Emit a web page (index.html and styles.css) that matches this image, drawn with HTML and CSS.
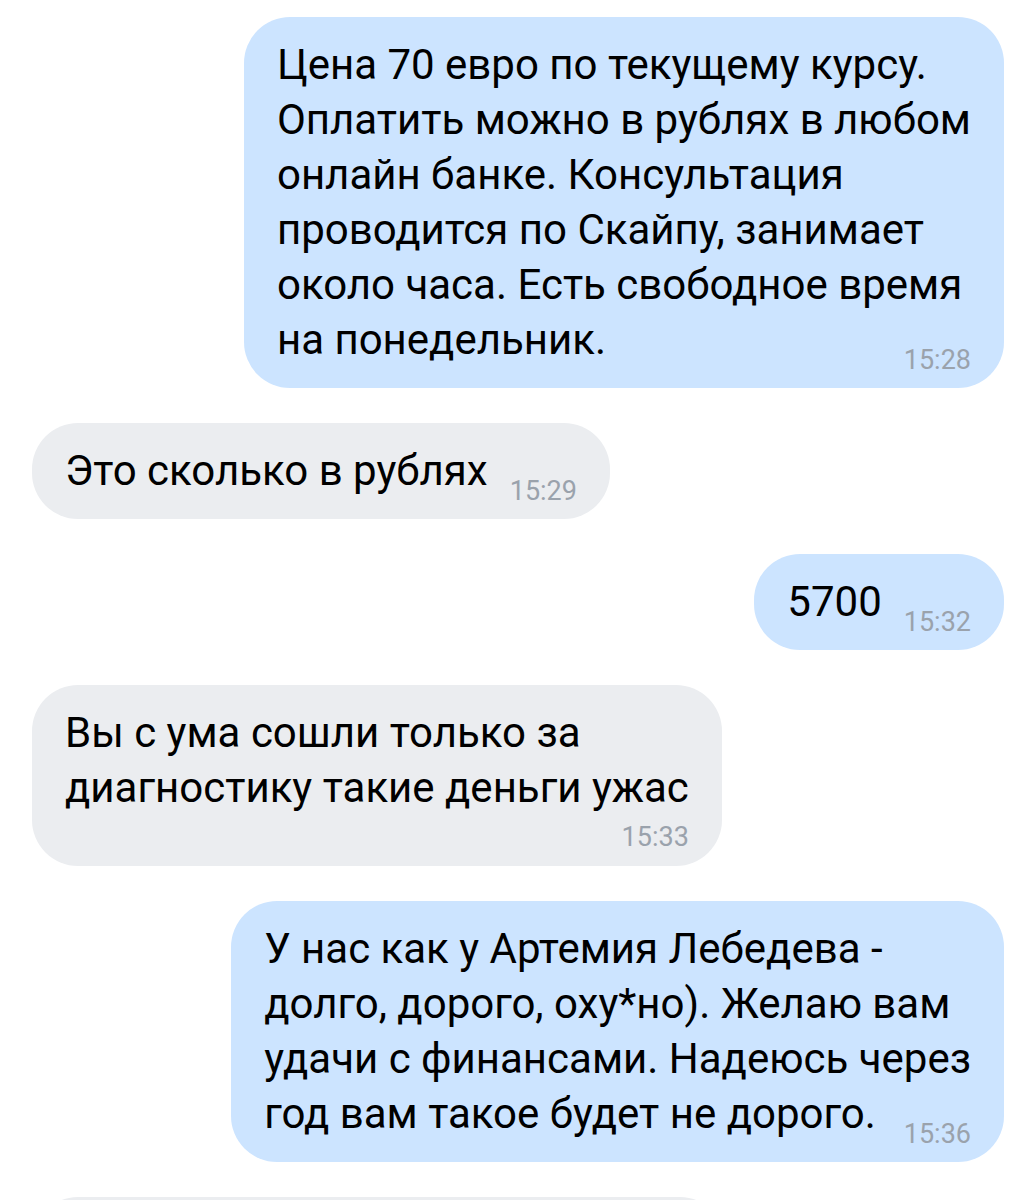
FILE: index.html
```html
<!DOCTYPE html>
<html lang="ru">
<head>
    <meta charset="UTF-8">
    <meta name="viewport" content="width=device-width, initial-scale=1.0">
    <title>Чат</title>
    <link rel="stylesheet" href="styles.css">
</head>
<body>
    <main class="chat">
        <div class="msg msg--out">
            <p class="msg__text">Цена 70 евро по текущему курсу.<br>Оплатить можно в рублях в любом<br>онлайн банке. Консультация<br>проводится по Скайпу, занимает<br>около часа. Есть свободное время<br>на понедельник.<span class="msg__time">15:28</span></p>
        </div>

        <div class="msg msg--in">
            <p class="msg__text">Это сколько в рублях<span class="msg__time">15:29</span></p>
        </div>

        <div class="msg msg--out">
            <p class="msg__text">5700<span class="msg__time">15:32</span></p>
        </div>

        <div class="msg msg--in">
            <p class="msg__text">Вы с ума сошли только за<br>диагностику такие деньги ужас<span class="msg__time msg__time--below">15:33</span></p>
        </div>

        <div class="msg msg--out">
            <p class="msg__text">У нас как у Артемия Лебедева -<br>долго, дорого, оху*но). Желаю вам<br>удачи с финансами. Надеюсь через<br>год вам такое будет не дорого.<span class="msg__time">15:36</span></p>
        </div>

        <!-- следующее сообщение обрезано краем экрана -->
        <div class="msg msg--in msg--cut"></div>
    </main>
</body>
</html>
```

FILE: styles.css
```css
body {
    margin: 0;
    background-color: #ffffff;
    font-family: Roboto, "Noto Sans", sans-serif;
    color: #000000;
    overflow: hidden;
}

.chat {
    display: flex;
    flex-direction: column;
    gap: 35px;
    padding: 17px 32px;
}

.msg {
    display: flow-root; /* floats (time) stay inside the bubble */
    max-width: 800px;
    padding: 20px 33px 21px;
    border-radius: 46px;
}

.msg--out {
    align-self: flex-end;
    background-color: #cce4ff;
}

.msg--in {
    align-self: flex-start;
    background-color: #ebedf0;
}

.msg--cut {
    width: 694px;
    height: 100px;
    padding: 0;
}

.msg__text {
    margin: 0;
    font-size: 42px;
    line-height: 55px;
    white-space: nowrap;
}

.msg__time {
    float: right;
    margin: 37px 0 -10px 22px;
    font-size: 27px;
    line-height: 22px;
    color: #9aa2ac;
}

.msg__time--below {
    float: none;
    display: block;
    margin: 14px 0 0;
    text-align: right;
    line-height: 16px;
}
```
